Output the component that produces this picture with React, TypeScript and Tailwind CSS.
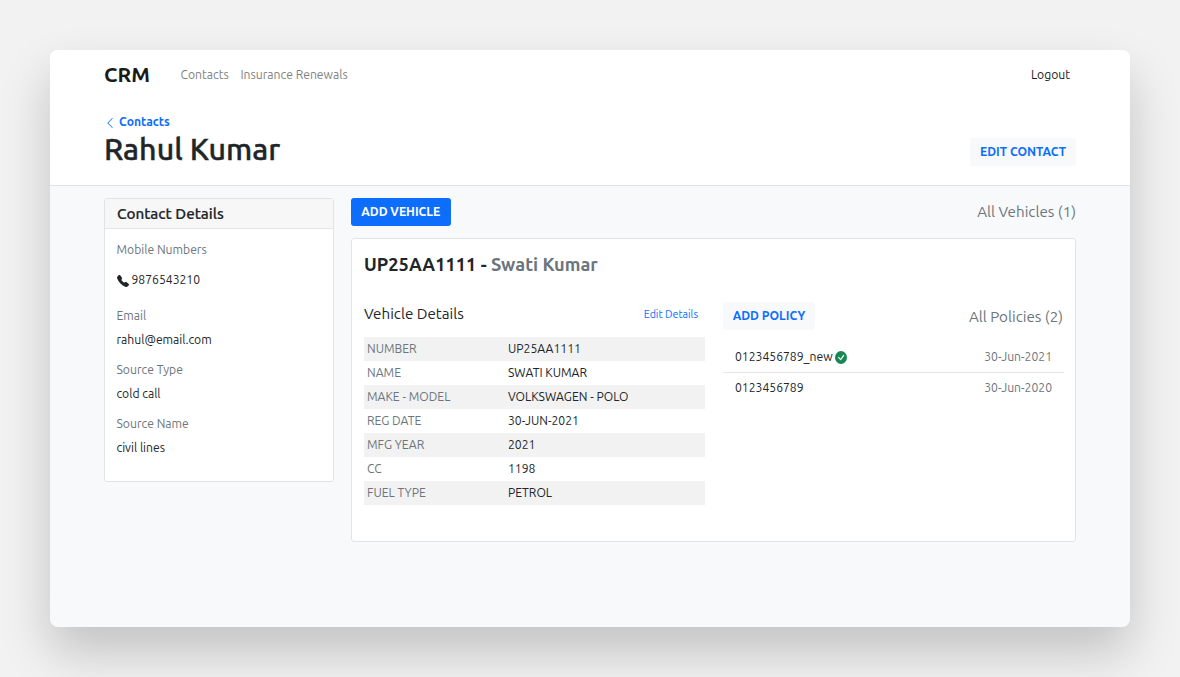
import React from "react";

const contactFields = [
  { label: "Email", value: "rahul@email.com" },
  { label: "Source Type", value: "cold call" },
  { label: "Source Name", value: "civil lines" },
];

const vehicleRows = [
  { label: "NUMBER", value: "UP25AA1111" },
  { label: "NAME", value: "SWATI KUMAR" },
  { label: "MAKE - MODEL", value: "VOLKSWAGEN - POLO" },
  { label: "REG DATE", value: "30-JUN-2021" },
  { label: "MFG YEAR", value: "2021" },
  { label: "CC", value: "1198" },
  { label: "FUEL TYPE", value: "PETROL" },
];

function ChevronLeft() {
  return (
    <svg className="mt-[2px]" width="12" height="12" viewBox="0 0 16 16" fill="currentColor">
      <path
        fillRule="evenodd"
        d="M11.354 1.646a.5.5 0 0 1 0 .708L5.707 8l5.647 5.646a.5.5 0 0 1-.708.708l-6-6a.5.5 0 0 1 0-.708l6-6a.5.5 0 0 1 .708 0z"
      />
    </svg>
  );
}

function Phone() {
  return (
    <svg className="mt-px" width="12" height="12" viewBox="0 0 16 16" fill="currentColor">
      <path
        fillRule="evenodd"
        d="M1.885.511a1.745 1.745 0 0 1 2.61.163L6.29 2.98c.329.423.445.974.315 1.494l-.547 2.19a.678.678 0 0 0 .178.643l2.457 2.457a.678.678 0 0 0 .644.178l2.189-.547a1.745 1.745 0 0 1 1.494.315l2.306 1.794c.829.645.905 1.87.163 2.611l-1.034 1.034c-.74.74-1.846 1.065-2.877.702a18.634 18.634 0 0 1-7.01-4.42 18.634 18.634 0 0 1-4.42-7.009c-.362-1.03-.037-2.137.703-2.877L1.885.511z"
      />
    </svg>
  );
}

function CheckCircle() {
  return (
    <svg className="mt-px" width="12" height="13" viewBox="0 0 16 16" preserveAspectRatio="none" fill="currentColor">
      <path d="M16 8A8 8 0 1 1 0 8a8 8 0 0 1 16 0zm-3.97-3.03a.75.75 0 0 0-1.08.022L7.477 9.417 5.384 7.323a.75.75 0 0 0-1.06 1.06L6.97 11.03a.75.75 0 0 0 1.079-.02l3.992-4.99a.75.75 0 0 0-.01-1.05z" />
    </svg>
  );
}

export default function App() {
  return (
    <div className="h-[677px] w-[1180px] overflow-hidden bg-[#f2f2f2] p-[50px] font-[Ubuntu,'Noto_Sans',sans-serif] text-[12.16px] leading-6 whitespace-nowrap text-[#212529]">
      <div className="h-[577px] overflow-hidden rounded-lg bg-[#f8f9fb] shadow-[0_25px_50px_rgba(0,0,0,0.2)]">
        <header className="h-[136px] border-b border-[#dee2e6] bg-white px-[54px]">
          <nav className="flex h-[50px] items-center">
            <span className="w-[76.5px] pb-[2px] text-[21px] font-bold text-[#1a1a1a]">CRM</span>
            <span className="w-[60px] text-[#7f7f7f]">Contacts</span>
            <span className="text-[#7f7f7f]">Insurance Renewals</span>
            <span className="mr-[6px] ml-auto text-[#1a1a1a]">Logout</span>
          </nav>
          <div className="flex items-end justify-between pt-[10px]">
            <div>
              <a className="flex h-6 items-center gap-[3px] text-[#0d6efd]">
                <ChevronLeft />
                <span className="font-bold">Contacts</span>
              </a>
              <h1 className="h-[32px] text-[30.4px] leading-[30px] font-medium [-webkit-text-stroke:0.4px_#212529]">
                Rahul Kumar
              </h1>
            </div>
            <button className="flex h-7 w-[106px] items-center justify-center rounded-[3px] bg-[#f8f9fa] font-bold text-[#0d6efd]">
              EDIT CONTACT
            </button>
          </div>
        </header>

        <main className="flex items-start justify-between px-[54px] pt-3">
          <aside className="h-[284px] w-[229.5px] rounded-[3px] border border-[#e1e3e5] bg-white">
            <h2 className="h-[30px] border-b border-[#e5e6e7] bg-[#f7f7f7] px-3 text-[15.2px] leading-[30px] font-medium [-webkit-text-stroke:0.2px_#212529]">
              Contact Details
            </h2>
            <div className="px-[11.5px] pt-[9px]">
              <div className="text-[#6c757d]">Mobile Numbers</div>
              <div className="mt-[6px] mb-3 flex items-center gap-[3px]">
                <Phone />
                <span>9876543210</span>
              </div>
              {contactFields.map((f) => (
                <div key={f.label} className="mb-[6px]">
                  <div className="text-[#6c757d]">{f.label}</div>
                  <div>{f.value}</div>
                </div>
              ))}
            </div>
          </aside>

          <section className="w-[725px]">
            <div className="flex h-7 items-center justify-between">
              <button className="h-7 w-[99.5px] rounded-[3px] bg-[#0d6efd] font-bold text-white">
                ADD VEHICLE
              </button>
              <span className="text-[15.2px] text-[#6c757d]">All Vehicles (1)</span>
            </div>
            <article className="mt-3 h-[304px] rounded-[3px] border border-[#e1e3e5] bg-white pt-[13px] pr-[11px] pl-3">
              <h3 className="h-6 text-[18.24px] font-bold">
                UP25AA1111 - <span className="text-[#6c757d]">Swati Kumar</span>
              </h3>
              <div className="mt-[26px] flex justify-between">
                <div className="w-[340.5px]">
                  <div className="flex h-6 items-center justify-between pr-[6.5px]">
                    <h4 className="text-[15.2px]">Vehicle Details</h4>
                    <a className="pb-px text-[10.64px] text-[#0d6efd]">Edit Details</a>
                  </div>
                  <dl className="mt-[11px]">
                    {vehicleRows.map((r) => (
                      <div key={r.label} className="flex h-6 px-[3px] odd:bg-[#f2f2f2]">
                        <dt className="w-[141px] text-[#6c757d]">{r.label}</dt>
                        <dd>{r.value}</dd>
                      </div>
                    ))}
                  </dl>
                </div>
                <div className="w-[341px]">
                  <div className="flex h-7 items-center justify-between pr-px">
                    <button className="h-7 w-[92px] rounded-[3px] bg-[#f8f9fa] font-bold text-[#0d6efd]">
                      ADD POLICY
                    </button>
                    <span className="pt-[2px] text-[15.2px] text-[#6c757d]">All Policies (2)</span>
                  </div>
                  <ul className="mt-3">
                    <li className="flex h-[31px] items-center justify-between border-b border-[#e4e6e8] px-3">
                      <span className="flex items-center gap-[2px]">
                        <span>0123456789_new</span>
                        <span className="text-[#198754]">
                          <CheckCircle />
                        </span>
                      </span>
                      <span className="text-[#6c757d]">30-Jun-2021</span>
                    </li>
                    <li className="flex h-[30px] items-center justify-between px-3">
                      <span>0123456789</span>
                      <span className="text-[#6c757d]">30-Jun-2020</span>
                    </li>
                  </ul>
                </div>
              </div>
            </article>
          </section>
        </main>
      </div>
    </div>
  );
}
